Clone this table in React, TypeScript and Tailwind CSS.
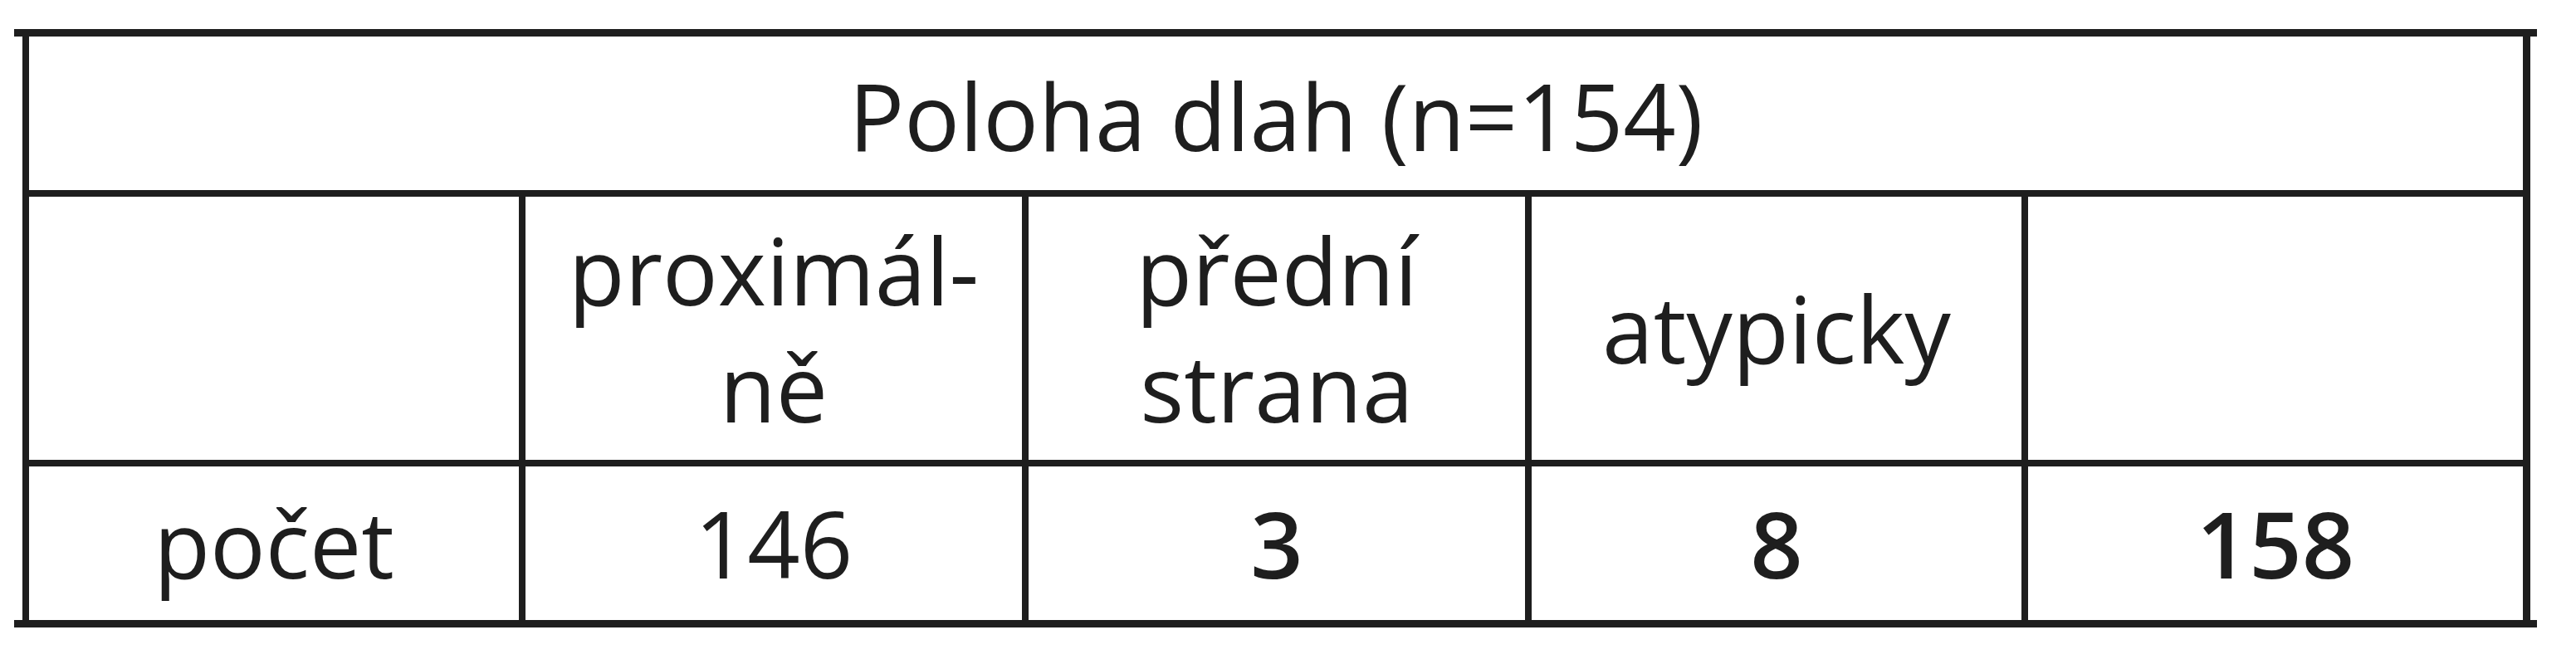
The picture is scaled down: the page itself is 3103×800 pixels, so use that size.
import React from "react";

const ink = "bg-[#1e1e1e]";

function Cell({ children, bold = false }: { children?: React.ReactNode; bold?: boolean }) {
  return (
    <div
      className={`bg-white flex items-center justify-center text-center ${bold ? "font-semibold" : "font-normal"}`}
    >
      {children}
    </div>
  );
}

export default function App() {
  return (
    <div
      className="w-[3103px] h-[800px] bg-white pt-[35px] pl-[17px] text-[#1e1e1e] text-[111px] leading-[141px]"
      style={{ fontFamily: '"Open Sans", "Noto Sans", sans-serif' }}
    >
      <div className="w-[3039px]">
        <div className={`h-[9px] ${ink}`} />
        <div
          className={`ml-[10px] w-[3021px] ${ink} pl-[8px] pr-[9px] grid grid-cols-[590px_598px_598px_590px_596px] grid-rows-[185px_317px_185px] gap-x-[8px] gap-y-[8px]`}
        >
          <div className="col-span-5 bg-white flex items-center justify-center pt-[6px]">
            Poloha dlah (n=154)
          </div>

          <Cell />
          <Cell>
            <div>
              proximál-
              <br />
              ně
            </div>
          </Cell>
          <Cell>
            <div>
              přední
              <br />
              strana
            </div>
          </Cell>
          <Cell>atypicky</Cell>
          <Cell />

          <Cell>počet</Cell>
          <Cell>146</Cell>
          <Cell bold>3</Cell>
          <Cell bold>8</Cell>
          <Cell bold>158</Cell>
        </div>
        <div className={`h-[9px] ${ink}`} />
      </div>
    </div>
  );
}
